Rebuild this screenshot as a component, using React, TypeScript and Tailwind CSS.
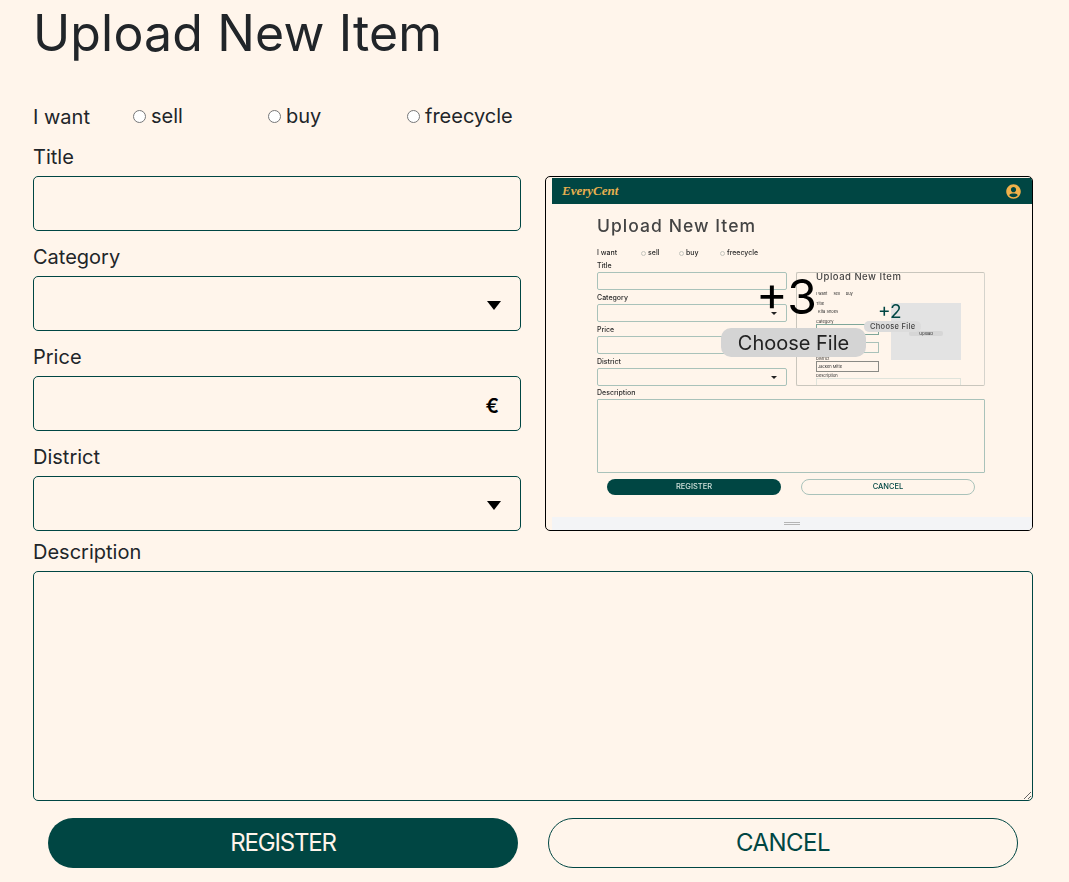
import { FaUserCircle } from "react-icons/fa";

const font = "font-['Inter','Liberation_Sans',sans-serif]";

const Arrow = ({ small }: { small?: boolean }) => (
  <span className={small
    ? "absolute right-[9px] top-[7px] border-x-[3px] border-t-[3px] border-x-transparent border-t-[#222]"
    : "absolute right-[20px] top-[25px] border-x-[7px] border-t-[9px] border-x-transparent border-t-black pointer-events-none"} />
);

const Field = ({ label, children }: { label: string, children: React.ReactNode }) => (
  <div>
    <label className="flex h-[45px] items-end pb-[4px] text-[20px] leading-[30px]">{label}</label>
    <div className="relative h-[55px]">{children}</div>
  </div>
);

const boxCls = "block h-full w-full rounded-[5px] border border-[#004643] bg-transparent px-3 appearance-none";

const MiniRadio = ({ label, w }: { label: string, w: string }) => (
  <span className={`flex items-center gap-[2px] ${w}`}>
    <span className="h-[5px] w-[5px] rounded-full border border-[#c4c4bd]" />
    {label}
  </span>
);

const MiniField = ({ label, arrow }: { label: string, arrow?: boolean }) => (
  <div>
    <div className="flex h-[14px] items-end pb-[2px] text-[7px] font-medium leading-[8px]">{label}</div>
    <div className="relative h-[18px] rounded-[2px] border border-[#a9c2ba]">
      {arrow && <Arrow small />}
    </div>
  </div>
);

// the screenshot inside the preview: smaller copy of the same form
const NestedInput = ({ label, value, top, cls }: { label: string, value?: string, top: string, cls: string }) => (
  <div>
    <div className={`${top} flex items-end text-[4px] leading-[5px]`}>{label}</div>
    <div className={`h-[11px] ${cls} flex items-center border pl-[1px] text-[4px]`}>{value}</div>
  </div>
);

const NestedPanel = () => (
  <div className="relative h-[114px] w-[189px] overflow-hidden rounded-[2px] border border-[#c9c6bd] border-r-[#d5d3cc] pl-[19px]">
    <div className="h-[10px] text-[9.5px] font-medium leading-[8px] tracking-[0.5px] text-[#444]">Upload New Item</div>
    <div className="mt-[7px] flex h-[8px] items-center gap-[6px] text-[4px]">
      <span>I want</span><span>sell</span><span>buy</span>
    </div>
    <div className="mt-[2px] flex gap-[12px]">
      <div className="w-[63px]">
        <NestedInput label="Title" value="Kita Shoes" top="h-[6px]" cls="border-transparent" />
        <NestedInput label="Category" top="h-[7px]" cls="border-[#7fa79a]" />
        <NestedInput label="Price" top="h-[7px]" cls="border-[#a9c2ba]" />
        <NestedInput label="District" value="Jacken Mitte" top="h-[8px]" cls="border-[#8a8a85]" />
      </div>
      <div className="mt-[3px] flex h-[57px] w-[70px] items-center justify-center bg-[#e3e3e3] pt-[3px]">
        <span className="rounded-[2px] bg-[#d6d6d6] px-[10px] text-[4px] leading-[5px]">Upload</span>
      </div>
    </div>
    <div className="-mt-[1px] flex h-[7px] items-end text-[4px] leading-[5px]">Description</div>
    <div className="h-[10px] w-[145px] border border-[#dfe3db]" />
    <span className="absolute left-[81px] top-[27px] text-[19px] leading-[24px] text-[#004643]">+2</span>
    <span className="absolute left-[67px] top-[48px] rounded-[5px] bg-[#dcdcdc] px-[6px] text-[7.5px] font-medium leading-[11px] tracking-[0.3px] text-[#444]">Choose File</span>
  </div>
);

const Preview = () => (
  <div className="relative h-[355px] overflow-hidden rounded-[5px] border border-black">
    <div className="flex h-full flex-col pl-[6px] blur-[0.35px]">
      <div className="mt-[1px] flex h-[26px] shrink-0 items-center justify-between bg-[#004643] pl-[10px] pr-[11px]">
        <span className="font-['Liberation_Serif',serif] text-[13px] font-bold italic text-[#e8b04f]">EveryCent</span>
        <FaUserCircle className="h-[15px] w-[15px] text-[#f0b04a]" />
      </div>
      <div className="flex-1 pl-[45px] text-[#2b2b2b]">
        <div className="mt-[10px] h-[24px] text-[17.5px] font-medium leading-[24px] tracking-[1.05px] text-[#444]">Upload New Item</div>
        <div className="mt-[10px] flex h-[10px] items-center text-[7px] font-medium">
          <span className="w-[44px]">I want</span>
          <MiniRadio label="sell" w="w-[38px]" />
          <MiniRadio label="buy" w="w-[41px]" />
          <MiniRadio label="freecycle" w="" />
        </div>
        <div className="flex w-[388px] gap-[9px]">
          <div className="w-[190px]">
            <MiniField label="Title" />
            <MiniField label="Category" arrow />
            <MiniField label="Price" />
            <MiniField label="District" arrow />
          </div>
          <div className="pt-[14px]"><NestedPanel /></div>
        </div>
        <div className="flex h-[13px] items-end pb-[2px] text-[7px] font-medium leading-[8px]">Description</div>
        <div className="h-[74px] w-[388px] rounded-[1px] border border-[#a9c2ba]" />
        <div className="ml-[10px] mt-[6px] flex gap-[20px] text-[7.5px] font-medium">
          <div className="flex h-[16px] w-[174px] items-center justify-center rounded-full bg-[#004643] text-[#cfe0da]">REGISTER</div>
          <div className="flex h-[16px] w-[174px] items-center justify-center rounded-full border border-[#a9c2ba] text-[#004643]">CANCEL</div>
        </div>
      </div>
      <div className="flex h-[13px] shrink-0 items-center justify-center bg-[#f3f4f6]">
        <span className="h-[3px] w-[16px] border-y border-[#b5b5b5]" />
      </div>
    </div>
    <div className="absolute left-[175px] top-[91px] flex w-[145px] flex-col items-center">
      <span className="-translate-x-[7px] text-[48px] leading-[58px] text-black">+3</span>
      <span className="mt-[2px] flex h-[29px] w-[145px] items-center justify-center rounded-[10px] bg-[#d4d4d4] text-[20px] text-[#222]">Choose File</span>
    </div>
  </div>
);

export default function App() {
  return (
    <div className={`${font} min-h-screen bg-[#fff5eb] px-[33px] pr-[36px] text-[#212529]`}>
      <h1 className="h-[66px] text-[50px] font-normal leading-[66px] tracking-[0.15px]">Upload New Item</h1>

      <div className="mt-[35px] flex h-[30px] items-center text-[20px]">
        <span className="w-[100px] translate-y-[1px]">I want</span>
        {[["sell", "w-[135px]"], ["buy", "w-[139px]"], ["freecycle", ""]].map(([name, w]) => (
          <label key={name} className={`flex items-center gap-[5px] ${w}`}>
            <input type="radio" name="type" className="m-0 h-[13px] w-[13px]" />
            {name}
          </label>
        ))}
      </div>

      <div className="grid grid-cols-2 gap-x-6">
        <div>
          <Field label="Title"><input className={boxCls} /></Field>
          <Field label="Category">
            <select className={boxCls} /><Arrow />
          </Field>
          <Field label="Price">
            <input className={boxCls} />
            <span className="absolute right-[22px] top-[15px] text-[20px] font-semibold leading-[30px] text-black">€</span>
          </Field>
          <Field label="District">
            <select className={boxCls} /><Arrow />
          </Field>
        </div>
        <div className="pt-[45px]"><Preview /></div>
      </div>

      <label className="flex h-[40px] items-end pb-[4px] text-[20px] leading-[30px]">Description</label>
      <textarea className="block h-[230px] w-full rounded-[5px] border border-[#004643] bg-transparent" />

      <div className="mt-[17px] flex gap-[30px] px-[15px]">
        <button className="h-[50px] w-[470px] rounded-full bg-[#004643] text-[24px] tracking-[-1.2px] text-[#fff5eb]">REGISTER</button>
        <button className="h-[50px] w-[470px] rounded-full border border-[#004643] text-[24px] tracking-[-0.5px] text-[#004643]">CANCEL</button>
      </div>
    </div>
  );
}
